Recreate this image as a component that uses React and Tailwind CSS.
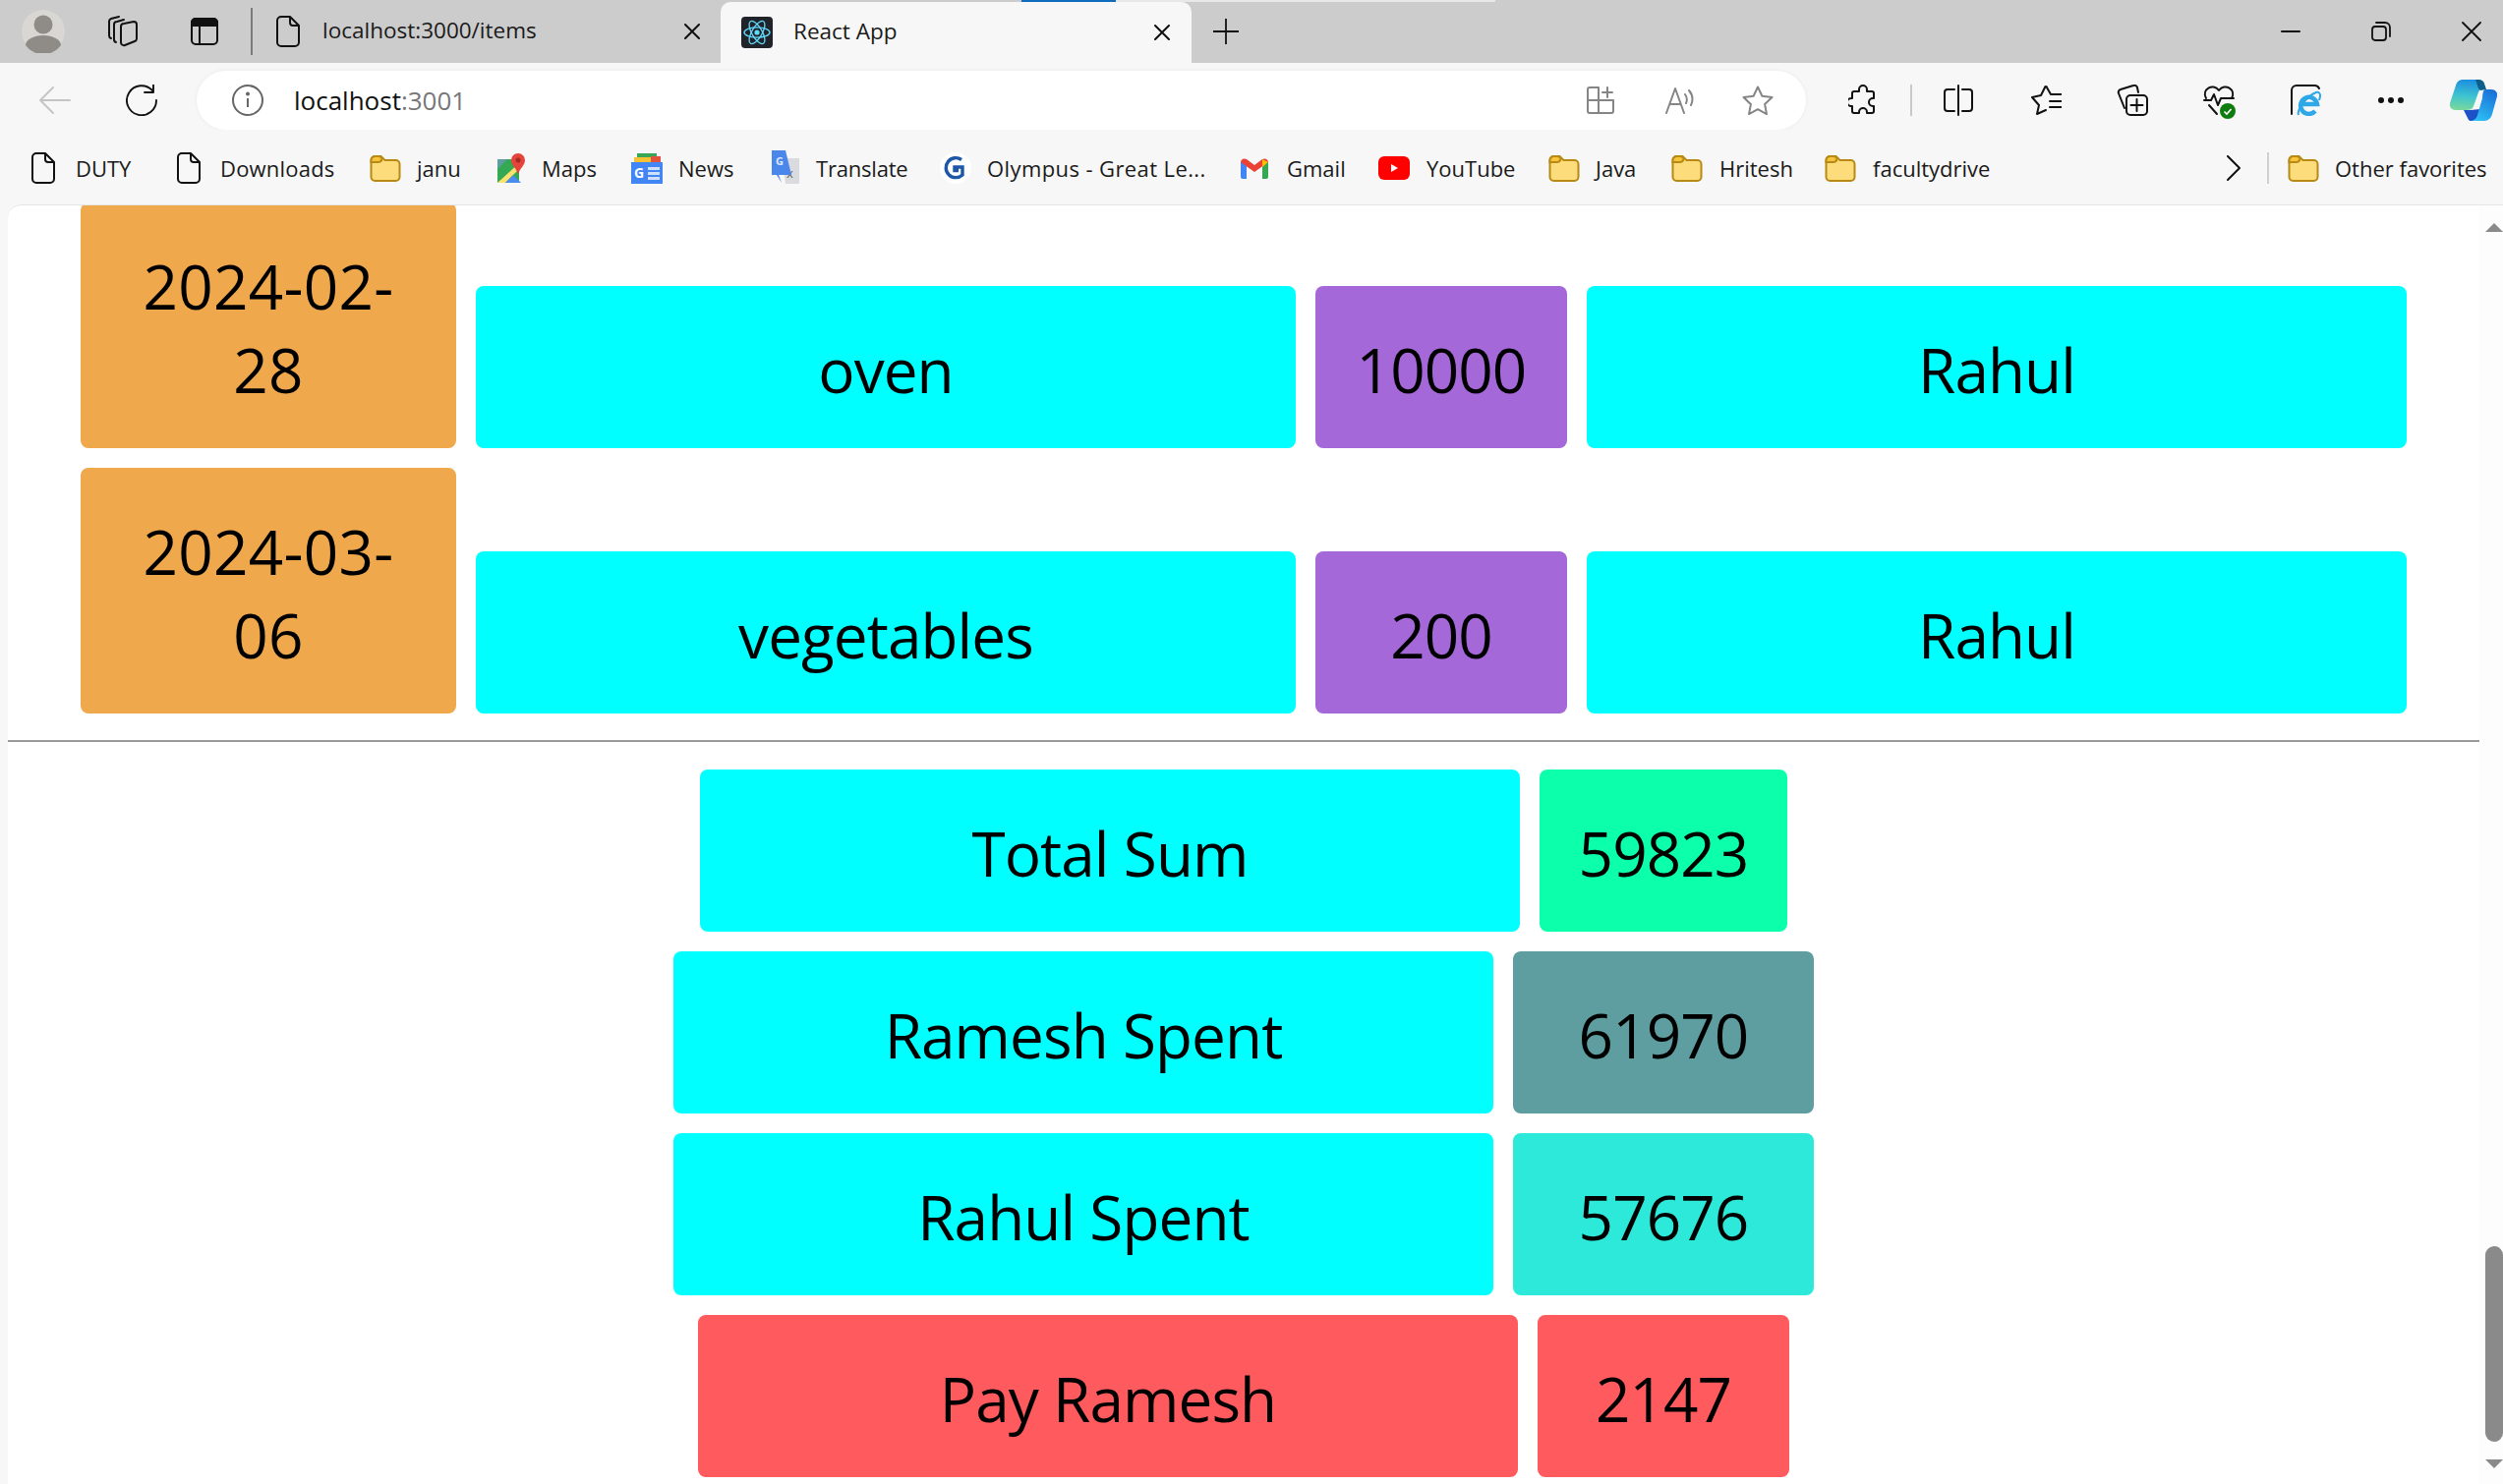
// App.jsx - Edge window showing the expense tracker page
const uiFont = "font-['Open_Sans','Noto_Sans',sans-serif]";

const PageIcon = () => (
    <svg width="24" height="32" viewBox="0 0 24 32" fill="none" stroke="#111" strokeWidth="2" strokeLinejoin="round">
        <path d="M5 1h9l9 9v17a4 4 0 0 1-4 4H5a4 4 0 0 1-4-4V5a4 4 0 0 1 4-4z" />
        <path d="M14 1v6a3 3 0 0 0 3 3h6" />
    </svg>
);

const FolderIcon = () => (
    <svg width="32" height="28" viewBox="0 0 32 28">
        <path d="M1.500 6a4 4 0 0 1 4-4h6l4 4h11a4 4 0 0 1 4 4v13a4 4 0 0 1-4 4h-21a4 4 0 0 1-4-4z" fill="#fddc7c" stroke="#b88a14" strokeWidth="2" />
        <path d="M1.500 6a4 4 0 0 1 4-4h3.500a4 4 0 0 1 3.500 2 4 4 0 0 1-3.500 4h-7.500z" fill="#f5c33c" stroke="#b88a14" strokeWidth="2" />
    </svg>
);

const MapsIcon = () => (
    <svg width="30" height="32" viewBox="0 0 30 32">
        <path d="M1 7h22v24H1z" fill="#34a853" />
        <path d="M1 7h10L1 17z" fill="#5f9ea0" />
        <path d="M1 31l22-20v6L9 31z" fill="#fbe26b" />
        <path d="M9 31l8-8 8 8z" fill="#4a8cf0" />
        <path d="M22 1a7 7 0 0 1 7 7c0 5-5 8-7 14-2-6-7-9-7-14a7 7 0 0 1 7-7z" fill="#e5443a" />
        <circle cx="22" cy="8" r="2.500" fill="#a32a22" />
    </svg>
);

const NewsIcon = () => (
    <svg width="32" height="32" viewBox="0 0 32 32">
        <path d="M6 1h20v10H6z" fill="#3aa757" />
        <path d="M3 5h24v8H3z" fill="#f6c232" />
        <path d="M20 4h10v8H20z" fill="#e0533d" />
        <path d="M0 10h32v22H0z" fill="#4285f4" />
        <text x="3" y="26" fontSize="14" fontWeight="700" fill="#fff" fontFamily="Open Sans, sans-serif">G</text>
        <path d="M17 15h12v3H17zM17 20h12v3H17zM17 25h12v3H17z" fill="#cfe0fc" />
    </svg>
);

const TranslateIcon = () => (
    <svg width="32" height="36" viewBox="0 0 32 36">
        <path d="M12 8h18v26H16z" fill="#d9dbde" />
        <text x="17" y="28" fontSize="13" fill="#666" fontFamily="Open Sans, sans-serif">x</text>
        <path d="M2 0h14l6 25H9l3 8-5-8H2z" fill="#4b87ea" />
        <text x="6" y="15" fontSize="11" fontWeight="700" fill="#dce8fc" fontFamily="Open Sans, sans-serif">G</text>
    </svg>
);

const OlympusIcon = () => (
    <svg width="32" height="32" viewBox="0 0 32 32">
        <circle cx="16" cy="16" r="16" fill="#fff" />
        <path d="M22 7.500a10 10 0 1 0 1 15.500v-8h-8v3.500h4" fill="none" stroke="#1d57a8" strokeWidth="3.400" />
    </svg>
);

const GmailIcon = () => (
    <svg width="30" height="24" viewBox="0 0 30 24">
        <path d="M1 5v16a2 2 0 0 0 2 2h4V10z" fill="#4285f4" />
        <path d="M29 5v16a2 2 0 0 1-2 2h-4V10z" fill="#34a853" />
        <path d="M1 6a4 4 0 0 1 6-3l8 6 8-6a4 4 0 0 1 6 3l-14 10z" fill="#ea4335" />
        <path d="M23 3l6 3-6 5z" fill="#fbbc04" />
    </svg>
);

const YouTubeIcon = () => (
    <svg width="32" height="24" viewBox="0 0 32 24">
        <rect width="32" height="24" rx="6" fill="#f00" />
        <path d="M13 8l7 4-7 4z" fill="#fff" />
    </svg>
);

const ReactIcon = () => (
    <svg width="32" height="32" viewBox="0 0 32 32">
        <rect width="32" height="32" rx="4" fill="#20232a" />
        <g fill="none" stroke="#61dafb" strokeWidth="1.300">
            <ellipse cx="16" cy="16" rx="13" ry="5.200" />
            <ellipse cx="16" cy="16" rx="13" ry="5.200" transform="rotate(60 16 16)" />
            <ellipse cx="16" cy="16" rx="13" ry="5.200" transform="rotate(120 16 16)" />
        </g>
        <circle cx="16" cy="16" r="2.600" fill="#61dafb" />
    </svg>
);

const IconStroke = ({ w, h, color = '#111', sw = 2, children }) => (
    <svg width={w} height={h} viewBox={`0 0 ${w} ${h}`} fill="none" stroke={color} strokeWidth={sw} strokeLinecap="round" strokeLinejoin="round">
        {children}
    </svg>
);

const Bookmark = ({ icon, label, className }) => (
    <div className={`flex items-center whitespace-nowrap ${className}`}>
        {icon}
        <span>{label}</span>
    </div>
);

// A coloured tile from the expense table
const Tile = ({ className, children }) => (
    <div className={`rounded-[8px] pb-[37px] pt-[43px] text-center text-[62px] leading-[85px] text-black ${uiFont} ${className}`}>
        {children}
    </div>
);

const ExpenseRow = ({ date, item, amount, person }) => (
    <div className="flex items-end gap-[20px] pl-[74px]">
        <Tile className="w-[382px] bg-[#efa84c] px-[40px] tracking-[0.3px]">{date}</Tile>
        <Tile className="w-[834px] bg-[#00ffff] tracking-[-0.9px]">{item}</Tile>
        <Tile className="w-[256px] bg-[#a468d8] tracking-[-0.9px]">{amount}</Tile>
        <Tile className="w-[834px] bg-[#00ffff] tracking-[-0.9px]">{person}</Tile>
    </div>
);

const SummaryRow = ({ label, value, labelColor, valueClass }) => (
    <div className="flex justify-center gap-[20px] tracking-[-0.9px]">
        <Tile className={`w-[834px] ${labelColor}`}>{label}</Tile>
        <Tile className={valueClass}>{value}</Tile>
    </div>
);

const expenses = [
    { date: '2024-02-28', item: 'oven', amount: '10000', person: 'Rahul' },
    { date: '2024-03-06', item: 'vegetables', amount: '200', person: 'Rahul' },
];

const summary = [
    { label: 'Total Sum', value: '59823', labelColor: 'bg-[#00ffff]', valueClass: 'w-[252px] bg-[#0cffab]' },
    { label: 'Ramesh Spent', value: '61970', labelColor: 'bg-[#00ffff]', valueClass: 'w-[306px] bg-[#5f9ea0]' },
    { label: 'Rahul Spent', value: '57676', labelColor: 'bg-[#00ffff]', valueClass: 'w-[306px] bg-[#2de9da]' },
    { label: 'Pay Ramesh', value: '2147', labelColor: 'bg-[#ff5b5e]', valueClass: 'w-[256px] bg-[#ff5b5e]' },
];

const TabBar = () => (
    <div className="relative flex h-[64px] items-center bg-[#cccccc] text-[22.5px] text-[#1a1a1a]">
        {/* loading strip along the very top */}
        <div className="absolute left-[1039px] top-0 h-[2px] w-[96px] bg-[#0f6cbd]" />
        <div className="absolute left-[1135px] top-0 h-[2px] w-[386px] bg-[#e8e8e8]" />

        <div className="ml-[22px] h-[44px] w-[44px]">
            <svg width="44" height="44" viewBox="0 0 44 44">
                <circle cx="22" cy="22" r="22" fill="#d8d7d3" />
                <circle cx="22" cy="15" r="9.500" fill="#8f8b86" />
                <path d="M4 36a18 10 0 0 1 36 0 22 22 0 0 1-36 0z" fill="#8f8b86" />
            </svg>
        </div>
        <div className="ml-[42px]">
            <IconStroke w={32} h={32}>
                <path d="M15 11a3 3 0 0 1 3-3l10-2a3 3 0 0 1 3 3v14a3 3 0 0 1-2 3l-10 4a3 3 0 0 1-4-3z" />
                <path d="M10 27a3 3 0 0 1-2-3V9a3 3 0 0 1 3-3l7-2" />
                <path d="M5 23a3 3 0 0 1-2-3V6a3 3 0 0 1 2-3l8-2" />
            </IconStroke>
        </div>
        <div className="ml-[54px]">
            <IconStroke w={28} h={28}>
                <rect x="1" y="1" width="26" height="26" rx="4" />
                <path d="M9 8v19" />
                <path d="M1 8V5a4 4 0 0 1 4-4h18a4 4 0 0 1 4 4v3z" fill="#111" />
            </IconStroke>
        </div>
        <div className="ml-[33px] h-[48px] w-[2px] bg-[#7a7a7a]" />
        <div className="ml-[24px]"><PageIcon /></div>
        <span className={`-mt-[2px] ml-[23px] w-[368px] whitespace-nowrap ${uiFont}`}>localhost:3000/items</span>
        <div className="flex h-[16px] w-[16px]">
            <IconStroke w={16} h={16}>
                <path d="M1 1l14 14M15 1 1 15" />
            </IconStroke>
        </div>

        {/* active tab */}
        <div className="ml-[21px] flex h-[62px] w-[479px] items-center self-end rounded-t-[10px] bg-[#f7f7f7] pl-[21px]">
            <ReactIcon />
            <span className={`-mt-[3px] ml-[21px] w-[367px] whitespace-nowrap ${uiFont}`}>React App</span>
            <IconStroke w={16} h={16}>
                <path d="M1 1l14 14M15 1 1 15" />
            </IconStroke>
        </div>

        <div className="ml-[22px]">
            <IconStroke w={26} h={26} sw={1.8}>
                <path d="M13 0v26M0 13h26" />
            </IconStroke>
        </div>

        {/* window buttons */}
        <div className="ml-[1060px]">
            <IconStroke w={20} h={4}>
                <path d="M1 2h18" />
            </IconStroke>
        </div>
        <div className="ml-[72px]">
            <IconStroke w={20} h={20} sw={1.8}>
                <rect x="1" y="5" width="14" height="14" rx="3" />
                <path d="M5 1h9a5 5 0 0 1 5 5v9" />
            </IconStroke>
        </div>
        <div className="ml-[72px]">
            <IconStroke w={20} h={20} sw={1.8}>
                <path d="M1 1l18 18M19 1 1 19" />
            </IconStroke>
        </div>
    </div>
);

const AddressBar = () => (
    <div className="flex h-[68px] items-center bg-[#f7f7f7] pt-[8px]">
        <div className="ml-[40px]">
            <IconStroke w={32} h={28} color="#c4c4c4" sw={1.8}>
                <path d="M1 14h30M14 1 1 14l13 13" />
            </IconStroke>
        </div>
        <div className="ml-[56px]">
            <IconStroke w={32} h={32} sw={1.9}>
                <path d="M27 6a15 15 0 1 0 4 10" />
                <path d="M28 0v8h-9" />
            </IconStroke>
        </div>
        {/* omnibox */}
        <div className="ml-[40px] flex h-[60px] w-[1637px] items-center rounded-full bg-white shadow-[0_0_4px_rgba(0,0,0,0.06)]">
            <div className="ml-[36px]">
                <svg width="32" height="32" viewBox="0 0 32 32" fill="none" stroke="#666" strokeWidth="2">
                    <circle cx="16" cy="16" r="15" />
                    <path d="M16 14v9" />
                    <circle cx="16" cy="9.500" r="1" fill="#666" />
                </svg>
            </div>
            <span className={`ml-[31px] w-[1315px] text-[26px] text-[#111] ${uiFont}`}>
                localhost<span className="text-[#777]">:3001</span>
            </span>
            <IconStroke w={28} h={28} color="#858585">
                <path d="M1 3a2 2 0 0 1 2-2h9v13H1zM1 14h11v13H3a2 2 0 0 1-2-2zM12 14h15v11a2 2 0 0 1-2 2H12z" />
                <path d="M21 1v10M16 6h10" />
            </IconStroke>
            <div className="ml-[52px]">
                <IconStroke w={30} h={28} color="#858585">
                    <path d="M1 27 10 2l9 25M4.500 18h11" />
                    <path d="M20 8a9 9 0 0 1 1 9M24 4a14 14 0 0 1 2 15" />
                </IconStroke>
            </div>
            <div className="ml-[48px]">
                <IconStroke w={32} h={30} color="#858585">
                    <path d="M16 1.500l4.400 9.300 10.100 1.300-7.400 7 1.900 10-9-4.900-9 4.900 1.900-10-7.400-7 10.100-1.300z" />
                </IconStroke>
            </div>
        </div>

        {/* toolbar icons */}
        <div className="ml-[43px]">
            <IconStroke w={30} h={32}>
                <path d="M11 5a4 4 0 0 1 8 0v2h5a2 2 0 0 1 2 2v5h-1a4 4 0 0 0 0 8h1v5a2 2 0 0 1-2 2h-5v-1a4 4 0 0 0-8 0v1H6a2 2 0 0 1-2-2v-5H3a4 4 0 0 1 0-8h1V9a2 2 0 0 1 2-2h5z" />
            </IconStroke>
        </div>
        <div className="ml-[33px] h-[32px] w-[2px] bg-[#c8c8c8]" />
        <div className="ml-[32px]">
            <IconStroke w={30} h={32}>
                <path d="M11 5H4a3 3 0 0 0-3 3v16a3 3 0 0 0 3 3h7M19 5h7a3 3 0 0 1 3 3v16a3 3 0 0 1-3 3h-7" />
                <path d="M15 1v30" />
            </IconStroke>
        </div>
        <div className="ml-[58px]">
            <IconStroke w={32} h={30}>
                <path d="M21 9 17 2a1 1 0 0 0-2 0l-4 8-9 2 7 8-2 9 9-4" />
                <path d="M22 9h10M20 16h12M20 22h12" />
            </IconStroke>
        </div>
        <div className="ml-[56px]">
            <IconStroke w={32} h={32}>
                <path d="M8 24 2 9a3 3 0 0 1 2-4l13-4a3 3 0 0 1 4 2l1 5" />
                <rect x="10" y="11" width="21" height="20" rx="4" />
                <path d="M20.500 15v12M14.500 21h12" />
            </IconStroke>
        </div>
        <div className="relative ml-[56px] h-[32px] w-[32px]">
            <IconStroke w={32} h={32}>
                <path d="M3 14C-2 5 10-2 16 6c6-8 18-1 13 8" />
                <path d="M1 16h7l3-6 4 11 3-7h13M6 21l8 9" />
            </IconStroke>
            <svg className="absolute bottom-[-3px] right-[-1px]" width="16" height="16" viewBox="0 0 16 16">
                <circle cx="8" cy="8" r="8" fill="#107c10" />
                <path d="M4.500 8.500l2.500 2.500 4.500-5" fill="none" stroke="#fff" strokeWidth="1.600" />
            </svg>
        </div>
        <div className="relative ml-[56px] h-[32px] w-[32px]">
            <IconStroke w={32} h={32}>
                <path d="M2 30V6a5 5 0 0 1 5-5h19a5 5 0 0 1 4 3" />
            </IconStroke>
            <svg className="absolute left-[7px] top-[6px]" width="25" height="26" viewBox="0 0 25 26" fill="none" stroke="#2ea8e6">
                <path d="M6 14h15a8.500 8.500 0 1 0-2 7" strokeWidth="4.500" />
                <path d="M2 25C0 20 10 6 20 2c4-1 5 3 3 8" strokeWidth="2" />
            </svg>
        </div>
        <div className="ml-[58px] flex gap-[4px]">
            <div className="h-[6px] w-[6px] rounded-full bg-[#111]" />
            <div className="h-[6px] w-[6px] rounded-full bg-[#111]" />
            <div className="h-[6px] w-[6px] rounded-full bg-[#111]" />
        </div>
        <div className="ml-[47px]">
            <svg width="48" height="42" viewBox="0 0 48 42">
                <defs>
                    <linearGradient id="copilotA" x1="0.5" y1="0" x2="0.4" y2="1">
                        <stop offset="0" stopColor="#1b8ee0" />
                        <stop offset="0.55" stopColor="#3fc4d0" />
                        <stop offset="1" stopColor="#7ad89a" />
                    </linearGradient>
                    <linearGradient id="copilotB" x1="0.8" y1="0" x2="0.3" y2="1">
                        <stop offset="0" stopColor="#1a6fd8" />
                        <stop offset="1" stopColor="#2dc0f5" />
                    </linearGradient>
                </defs>
                <path d="M13 0h16c2 0 4 1 5 3l2 6c-3-1-6 1-7 4l-5 14c-1 3-4 4-7 4H6c-4 0-7-3-6-7l6-18c1-4 4-6 7-6z" fill="url(#copilotA)" />
                <path d="M26 0h3c3 0 5 1 6 4l2 6-6 1-2-2z" fill="#0d5f8a" />
                <path d="M14 31l5 10c1 1 2 1 3 1 3 0 6-2 7-6l2-6-10 1z" fill="#1e50c8" />
                <path d="M36 10h6c4 0 7 3 6 7l-5 18c-1 4-4 7-8 7H20c4 0 7-2 8-6l5-17c0-4 1-9 3-9z" fill="url(#copilotB)" />
            </svg>
        </div>
    </div>
);

const BookmarksBar = () => (
    <div className={`flex h-[76px] items-center bg-[#f7f7f7] pt-[2px] pl-[32px] text-[22px] text-[#1a1a1a] ${uiFont}`}>
        <Bookmark className="w-[148px] gap-[21px]" icon={<PageIcon />} label="DUTY" />
        <Bookmark className="w-[196px] gap-[20px] tracking-[0.2px]" icon={<PageIcon />} label="Downloads" />
        <Bookmark className="w-[129px] gap-[16px]" icon={<FolderIcon />} label="janu" />
        <Bookmark className="w-[137px] gap-[16px]" icon={<MapsIcon />} label="Maps" />
        <Bookmark className="w-[141px] gap-[16px]" icon={<NewsIcon />} label="News" />
        <Bookmark className="w-[173px] gap-[15px] tracking-[-0.2px]" icon={<TranslateIcon />} label="Translate" />
        <Bookmark className="w-[305px] gap-[16px] tracking-[0.4px]" icon={<OlympusIcon />} label="Olympus - Great Le..." />
        <Bookmark className="w-[141px] gap-[18px]" icon={<GmailIcon />} label="Gmail" />
        <Bookmark className="w-[173px] gap-[17px]" icon={<YouTubeIcon />} label="YouTube" />
        <Bookmark className="w-[125px] gap-[16px]" icon={<FolderIcon />} label="Java" />
        <Bookmark className="w-[156px] gap-[17px]" icon={<FolderIcon />} label="Hritesh" />
        <Bookmark className="w-[409px] gap-[17px]" icon={<FolderIcon />} label="facultydrive" />
        <IconStroke w={14} h={26}>
            <path d="M1 1l12 12L1 25" />
        </IconStroke>
        <div className="ml-[27px] h-[32px] w-[2px] bg-[#d0d0d0]" />
        <Bookmark className="ml-[19px] gap-[16px]" icon={<FolderIcon />} label="Other favorites" />
    </div>
);

const Scrollbar = () => (
    <div className="flex w-[24px] flex-col items-end bg-[#fdfdfd]">
        <div className="mt-[18px] h-0 w-0 border-x-[9px] border-b-[9px] border-x-transparent border-b-[#8a8a8a]" />
        <div className="mt-[1032px] h-[199px] w-[18px] rounded-full bg-[#8a8a8a]" />
        <div className="mt-[18px] h-0 w-0 border-x-[9px] border-t-[9px] border-x-transparent border-t-[#8a8a8a]" />
    </div>
);

export default function App() {
    return (
        <div className="flex h-[1510px] flex-col overflow-hidden bg-[#f7f7f7]">
            <TabBar />
            <AddressBar />
            <BookmarksBar />
            <div className="ml-[8px] flex min-h-0 flex-1 overflow-hidden rounded-tl-[14px] border-t border-[#e6e6e6] bg-white">
                <div className="flex-1 overflow-hidden">
                    <div className="-mt-[3px] flex flex-col gap-[20px]">
                        {expenses.map((row) => (
                            <ExpenseRow key={row.date} {...row} />
                        ))}
                    </div>
                    <hr className="mt-[27px] h-[2px] border-0 bg-[#9a9a9a]" />
                    <div className="mt-[28px] flex flex-col gap-[20px]">
                        {summary.map((row) => (
                            <SummaryRow key={row.label} {...row} />
                        ))}
                    </div>
                </div>
                <Scrollbar />
            </div>
        </div>
    );
}
